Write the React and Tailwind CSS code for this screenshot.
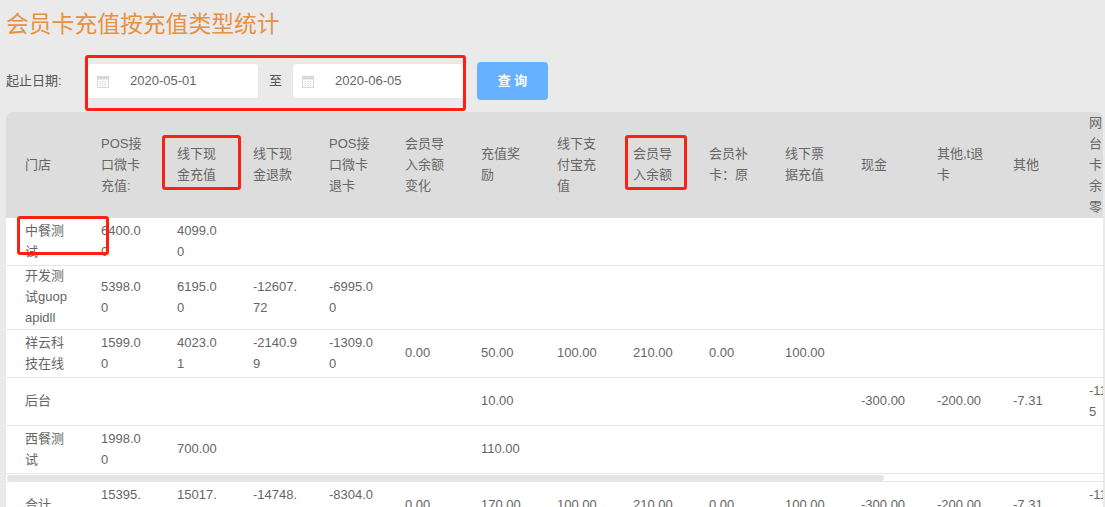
import React from 'react';

const headers = [
  '门店', 'POS接口微卡充值:', '线下现金充值', '线下现金退款', 'POS接口微卡退卡', '会员导入余额变化', '充值奖励',
  '线下支付宝充值', '会员导入余额', '会员补卡\uFF1A原', '线下票据充值', '现金', '其他,t退卡', '其他',
];

const rows = [
  ['中餐测试', '6400.00', '4099.00'],
  ['开发测试guopapidll', '5398.00', '6195.00', '-12607.72', '-6995.00'],
  ['祥云科技在线', '1599.00', '4023.01', '-2140.99', '-1309.00', '0.00', '50.00', '100.00', '210.00', '0.00', '100.00'],
  ['后台', '', '', '', '', '', '10.00', '', '', '', '', '-300.00', '-200.00', '-7.31', '-1111.25'],
  ['西餐测试', '1998.00', '700.00', '', '', '', '110.00'],
];

const total = ['合计', '15395.00', '15017.01', '-14748.71', '-8304.00', '0.00', '170.00', '100.00', '210.00', '0.00', '100.00', '-300.00', '-200.00', '-7.31', '-1111.25'];

function Cols() {
  return (
    <colgroup>
      {Array.from({ length: 15 }).map((_, i) => <col key={i} className="w-[76px]" />)}
    </colgroup>
  );
}

function Cell({ children }) {
  return <div className="-mt-px mb-px">{children}</div>;
}

function Row({ cells }) {
  return (
    <tr>
      {Array.from({ length: 15 }).map((_, i) => (
        <td key={i} className="h-12 pl-[19px] pr-[10.5px] py-0 align-middle break-all border-b border-[#e6e6e6]">
          <Cell>{cells[i]}</Cell>
        </td>
      ))}
    </tr>
  );
}

function CalendarIcon() {
  return (
    <svg width="12" height="13" viewBox="0 0 12 13" className="shrink-0">
      <rect x="0.5" y="1.5" width="11" height="11" fill="none" stroke="#d5d8de" />
      <rect x="1" y="2" width="10" height="2.5" fill="#d5d8de" />
      <path d="M3 0.5v2M9 0.5v2" stroke="#d5d8de" />
      <path d="M2.5 6.5h7M2.5 8.5h7M2.5 10.5h7" stroke="#d5d8de" strokeDasharray="1.5 1" />
    </svg>
  );
}

function DateInput({ value }) {
  return (
    <div className="w-[172px] h-9 flex items-center pl-[9px] gap-[21px] bg-white border border-[#e4e7ed] rounded">
      <CalendarIcon />
      <span className="text-[13px] text-[#666]">{value}</span>
    </div>
  );
}

function Mark({ className }) {
  return <div className={`absolute border-[3px] border-[#ff2015] rounded-[3px] pointer-events-none ${className}`} />;
}

export default function App() {
  return (
    <div
      className="relative h-[507px] overflow-hidden bg-[#eaeaea] text-[13px] text-[#666]"
      style={{ fontFamily: '"Liberation Sans", "Noto Sans CJK SC", sans-serif' }}
    >
      <div className="h-[50px] pl-[6px] pb-[2px] flex items-center text-[22.8px] text-[#e8913f]">会员卡充值按充值类型统计</div>

      <div className="mt-3 h-[38px] pl-[6px] flex items-center">
        <span className="w-[81px] text-[#555]">起止日期:</span>
        <DateInput value="2020-05-01" />
        <span className="w-[33px] text-center text-[#555]">至</span>
        <DateInput value="2020-06-05" />
        <button className="ml-[13px] w-[71px] h-[38px] bg-[#66b1ff] rounded text-white font-bold">查 询</button>
      </div>

      <div className="relative mt-3 ml-[6px] w-[1097px] h-[395px] overflow-hidden rounded-t-md bg-white leading-[21px]">
        <table className="table-fixed w-[1140px] border-separate border-spacing-0">
          <Cols />
          <thead>
            <tr className="bg-[#dddddd]">
              {headers.map((h) => (
                <th key={h} className="h-[106px] pl-[19px] pr-[10.5px] py-0 align-middle text-left font-normal break-all">
                  <Cell>{h}</Cell>
                </th>
              ))}
              <th className="h-[106px] pl-[19px] pr-[10.5px] py-0 align-middle text-left font-normal">
                <Cell>网<br />台<br />卡<br />余<br />零</Cell>
              </th>
            </tr>
          </thead>
          <tbody>
            {rows.map((r) => <Row key={r[0]} cells={r} />)}
          </tbody>
        </table>
        <div className="h-[7px]" />
        <table className="table-fixed w-[1140px] border-separate border-spacing-0 border-t border-[#e6e6e6]">
          <Cols />
          <tbody>
            <Row cells={total} />
          </tbody>
        </table>
        {/* scrollbar sits over the gap between body and footer */}
        <div className="absolute left-px top-[363px] w-[877px] h-[6px] rounded-[3px] bg-[#e5e5e5]" />
      </div>

      <Mark className="left-[85px] top-[55px] w-[381px] h-[56px]" />
      <Mark className="left-[162px] top-[135px] w-[79px] h-[55px]" />
      <Mark className="left-[625px] top-[135px] w-[62px] h-[55px]" />
      <Mark className="left-[17px] top-[216px] w-[92px] h-[39px]" />
    </div>
  );
}
